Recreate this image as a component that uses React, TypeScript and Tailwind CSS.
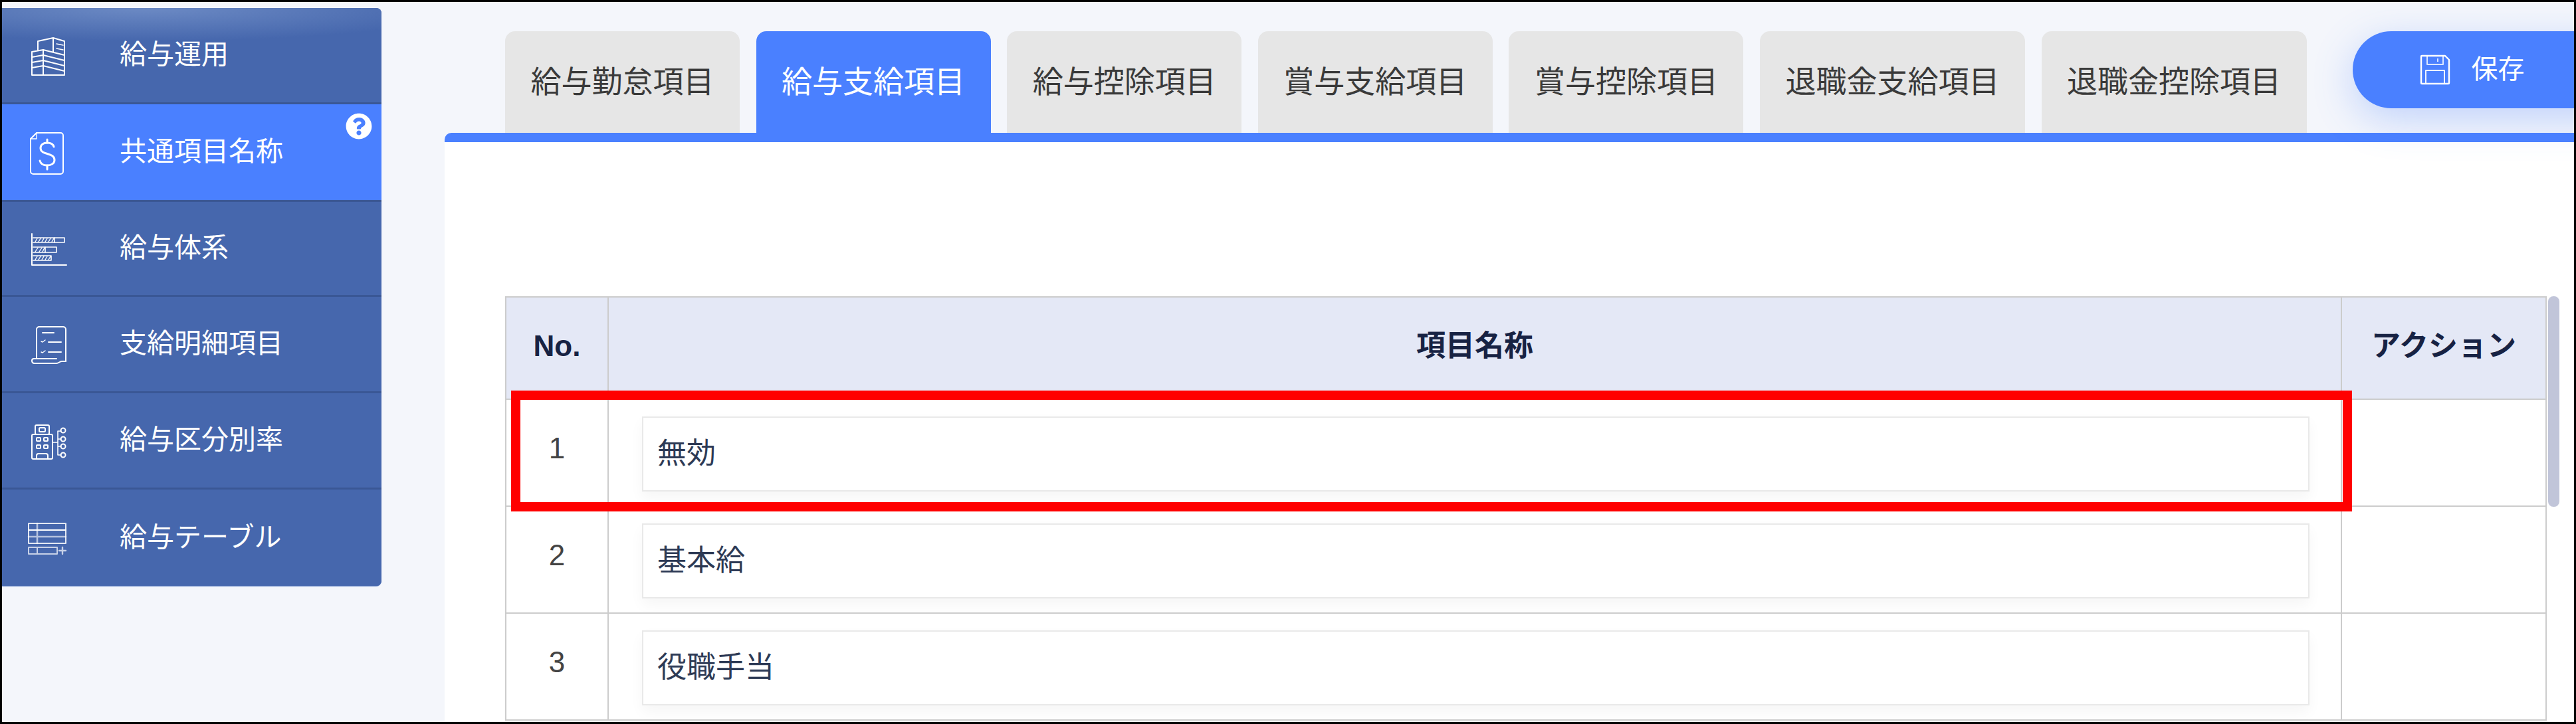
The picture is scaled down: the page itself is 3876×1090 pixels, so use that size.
import { FaQuestionCircle } from "react-icons/fa";

const S = { fill: "none", stroke: "#fff", strokeLinecap: "round" as const, strokeLinejoin: "round" as const };

function Box({ y, children, w = 2 }: { y: number; children: React.ReactNode; w?: number }) {
  return (
    <svg viewBox={`0 ${y} 80 80`} className="w-[80px] h-[80px] shrink-0" strokeWidth={w} {...S}>
      {children}
    </svg>
  );
}

const IconBuilding = () => (
  <Box y={-2}>
    <path d="M22 31V17L45 12V33M45 12L62 17V68H13V33L30 30L62 38" />
    <path d="M30 30V68M13 41L30 38L62 46M13 49L30 46L62 54M13 57L30 54L62 62" />
    <path d="M50 21L60 23M50 28L60 30" strokeWidth={1.5} />
  </Box>
);

const IconDollar = () => (
  <Box y={-4}>
    <path d="M20 7H56a4 4 0 0 1 4 4V65a4 4 0 0 1-4 4H15a4 4 0 0 1-4-4V16Z" />
    <path d="M20 7V16H11" strokeWidth={1.4} />
    <path d="M46 28c-1-4-5-6-10-6c-6 0-10 3-10 8c0 11 21 6 21 18c0 5-5 8-11 8c-6 0-10-3-11-7" strokeWidth={3} />
    <path d="M36 17V22M36 56V62" strokeWidth={3} />
  </Box>
);

const IconBars = () => (
  <Box y={-6} w={1.6}>
    <path d="M13 12V59H65" strokeWidth={2} />
    <path d="M15 18H62V25H15M15 32H50V40H15M15 45H42V52H15" />
    <path d="M47 18V25M33 32V40" />
    <path d="M18 24L21 19M23 24L26 19M28 24L31 19M33 24L36 19M38 24L41 19M43 24L46 19" strokeWidth={1.3} />
    <path d="M18 39L22 33M24 39L28 33M29 39L32 33" strokeWidth={1.3} />
    <path d="M18 51L21 46M23 51L26 46M28 51L31 46M33 51L36 46M38 51L41 46" strokeWidth={1.3} />
  </Box>
);

const IconList = () => (
  <Box y={-2}>
    <path d="M20 60V16a4 4 0 0 1 4-4H60a4 4 0 0 1 4 4V64" />
    <path d="M64 64H58c-3 0-5 3-8 3H17c-3 0-4-2-4-4c0-2 1-3 3-3H50" />
    <path d="M29 21H46M38 35H57M38 50H57" />
    <path d="M27 34L29 35L33 32M27 50L29 51L33 48" strokeWidth={1.4} />
  </Box>
);

const IconOrg = () => (
  <Box y={-2}>
    <rect x="13" y="29" width="31" height="37" rx="2" />
    <rect x="18" y="15" width="21" height="14" rx="2" />
    <rect x="24" y="19" width="9" height="6" rx="1.5" />
    <rect x="20" y="34" width="6" height="5" rx="1" />
    <rect x="31" y="34" width="6" height="5" rx="1" />
    <rect x="20" y="45" width="6" height="5" rx="1" />
    <rect x="31" y="45" width="6" height="5" rx="1" />
    <path d="M20 66V61a3 3 0 0 1 3-3H34a3 3 0 0 1 3 3V66" />
    <path d="M44 41H52M52 24V60M52 24H57M52 36H57M52 47H57M52 60H57" strokeWidth={1.6} />
    <circle cx="60" cy="23" r="3.5" />
    <circle cx="60" cy="36" r="3.5" />
    <circle cx="60" cy="47" r="3.5" />
    <circle cx="60" cy="60" r="3.5" />
  </Box>
);

const IconTable = () => (
  <Box y={0}>
    <path d="M8 18H64V48H8Z" opacity={0.85} />
    <path d="M8 28H64" />
    <path d="M8 38H64M21 18V48" opacity={0.6} strokeWidth={2.6} />
    <path d="M8 54H51V64H8ZM21 54V64" opacity={0.7} />
    <path d="M54 59H64M59 54V64" opacity={0.7} strokeWidth={2.4} />
  </Box>
);

const menu = [
  { label: "給与運用", icon: <IconBuilding />, h: "h-[145px]" },
  { label: "共通項目名称", icon: <IconDollar />, active: true, h: "h-[147px]" },
  { label: "給与体系", icon: <IconBars />, h: "h-[143px]" },
  { label: "支給明細項目", icon: <IconList />, h: "h-[145px]" },
  { label: "給与区分別率", icon: <IconOrg />, h: "h-[145px]" },
  { label: "給与テーブル", icon: <IconTable />, h: "h-[145px]" },
];

const tabs = ["給与勤怠項目", "給与支給項目", "給与控除項目", "賞与支給項目", "賞与控除項目", "退職金支給項目", "退職金控除項目"];
const rows = ["無効", "基本給", "役職手当"];

export default function App() {
  return (
    <div className="relative flex w-[3876px] h-[1090px] overflow-hidden border-[3px] border-black bg-[#f4f6fb] font-['Liberation_Sans','Noto_Sans_CJK_JP',sans-serif]">
      <aside className="mt-[9px] w-[571px] h-[870px] shrink-0 rounded-r-[8px] overflow-hidden bg-[#4667ad] shadow-[0_1px_0_#7391cc]">
        {menu.map((m, i) => (
          <div
            key={m.label}
            className={`relative flex items-center ${m.h} pl-[32px] text-[41px] text-white last:border-b-0 border-b-[3px] border-[#3a5795] ${
              m.active ? "bg-[#4a80ff]" : i === 0 ? "bg-[radial-gradient(ellipse_470px_50px_at_38%_0%,#6c8ac4,#4667ad)]" : "bg-[#4667ad]"
            }`}
          >
            {m.icon}
            <span className="ml-[65px] leading-[48px] pb-[2px]">{m.label}</span>
            {m.active && <FaQuestionCircle className="absolute right-[14px] top-[13px] w-[40px] h-[40px] text-white" />}
          </div>
        ))}
      </aside>

      <main className="ml-[95px] flex-1 min-w-0 flex flex-col">
        <div className="flex items-start mt-[44px] ml-[91px] h-[153px] shrink-0">
          <div className="flex gap-[24.6px]">
            {tabs.map((t, i) => (
              <div
                key={t}
                className={`h-[153px] px-[38.5px] pt-[52px] rounded-t-[15px] text-[46px] leading-[48px] whitespace-nowrap ${
                  i === 1 ? "bg-[#4a80ff] text-white" : "bg-[#e6e6e6] text-[#3a3a3a]"
                }`}
              >
                {t}
              </div>
            ))}
          </div>
          <div className="relative z-10 ml-[69px] flex items-center shrink-0 w-[420px] h-[116px] pl-[101px] rounded-l-[58px] bg-[#4a80ff] text-white text-[40px] shadow-[0_16px_60px_rgba(74,128,255,0.3)]">
            <svg viewBox="0 0 46 46" className="w-[46px] h-[46px] shrink-0" fill="none" stroke="#fff" strokeWidth="2.4" strokeLinejoin="round">
              <path d="M2 3a1 1 0 0 1 1-1H38L44 8V43a1 1 0 0 1-1 1H3a1 1 0 0 1-1-1Z" />
              <path d="M11 2V15H35V2M27 6V11" strokeWidth="2" opacity="0.8" />
              <path d="M9 44V24H37V44" strokeWidth="2" opacity="0.9" />
            </svg>
            <span className="ml-[32px] pb-[2px]">保存</span>
          </div>
        </div>

        <section className="flex-1 min-h-0 flex items-start gap-[2px] border-t-[14px] border-[#4a80ff] rounded-tl-[10px] bg-white pl-[91px] pt-[232px]">
          <table className="table-fixed border-collapse w-[3070px] shrink-0 text-[44px]">
            <colgroup>
              <col className="w-[154px]" />
              <col className="w-[2608px]" />
              <col className="w-[308px]" />
            </colgroup>
            <thead>
              <tr className="h-[154px] bg-[#e4e8f6] text-[#172243] font-bold">
                <th className="border-2 border-[#cccccc] pb-[6px] font-bold">No.</th>
                <th className="border-2 border-[#cccccc] pb-[6px] font-bold">項目名称</th>
                <th className="border-2 border-[#cccccc] pb-[6px] font-bold">アクション</th>
              </tr>
            </thead>
            <tbody>
              {rows.map((r, i) => (
                <tr key={r} className="h-[161px]">
                  <td className="border-2 border-[#cccccc] text-center text-[#444444] pb-[14px]">{i + 1}</td>
                  <td className="border-2 border-[#cccccc] pl-[50px] pr-[47px] pt-[4px]">
                    <div className="flex items-center h-[113px] pl-[21px] pb-[2px] border-2 border-[#e9e9e9] bg-white text-[#2d3a55] shadow-[0_10px_20px_rgba(0,0,0,0.04)]">
                      {r}
                    </div>
                  </td>
                  <td className="border-2 border-[#cccccc]" />
                </tr>
              ))}
            </tbody>
          </table>
          <div className="w-[17px] h-[317px] shrink-0 rounded-[8px] bg-[#c1c5d9]" />
        </section>
      </main>

      <div className="absolute left-[766px] top-[585px] w-[2770px] h-[182px] border-[14px] border-[#ff0000]" />
    </div>
  );
}
